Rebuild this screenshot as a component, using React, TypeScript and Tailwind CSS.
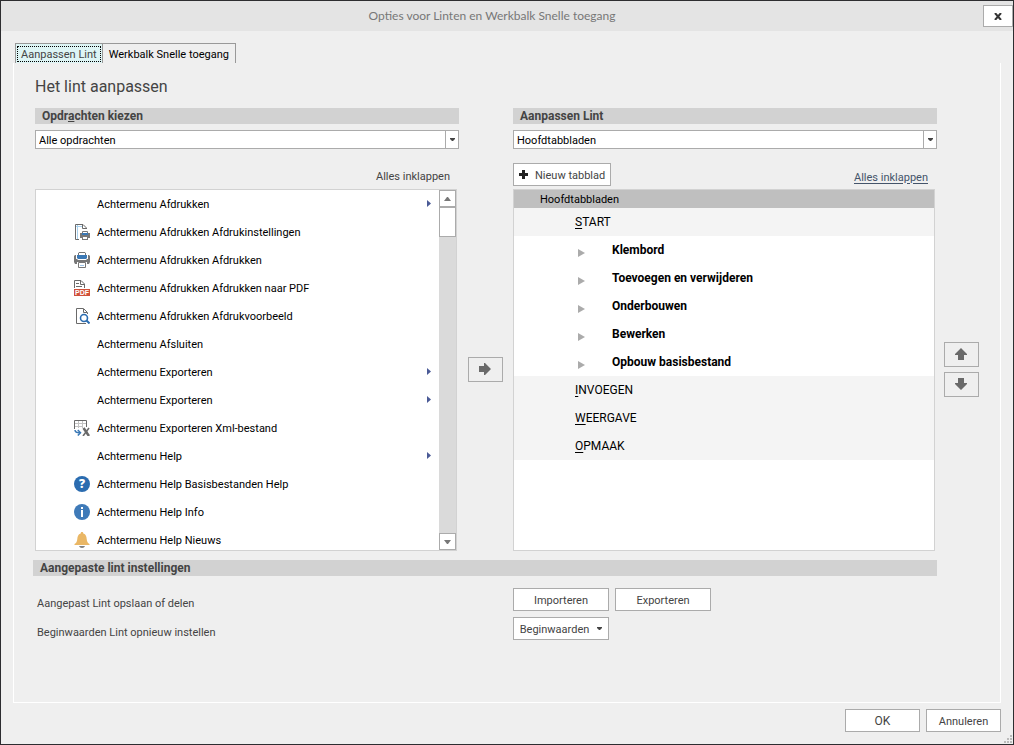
import { useState, type ReactNode } from "react";

type IconName = "page-setup" | "printer" | "pdf" | "preview" | "xml" | "help" | "info" | "bell";

type Command = { label: string; icon?: IconName; submenu?: boolean };

const COMMANDS: Command[] = [
  { label: "Achtermenu Afdrukken", submenu: true },
  { label: "Achtermenu Afdrukken Afdrukinstellingen", icon: "page-setup" },
  { label: "Achtermenu Afdrukken Afdrukken", icon: "printer" },
  { label: "Achtermenu Afdrukken Afdrukken naar PDF", icon: "pdf" },
  { label: "Achtermenu Afdrukken Afdrukvoorbeeld", icon: "preview" },
  { label: "Achtermenu Afsluiten" },
  { label: "Achtermenu Exporteren", submenu: true },
  { label: "Achtermenu Exporteren", submenu: true },
  { label: "Achtermenu Exporteren Xml-bestand", icon: "xml" },
  { label: "Achtermenu Help", submenu: true },
  { label: "Achtermenu Help Basisbestanden Help", icon: "help" },
  { label: "Achtermenu Help Info", icon: "info" },
  { label: "Achtermenu Help Nieuws", icon: "bell" },
];

const RIBBON_TABS = [
  {
    name: "START",
    groups: ["Klembord", "Toevoegen en verwijderen", "Onderbouwen", "Bewerken", "Opbouw basisbestand"],
  },
  { name: "INVOEGEN", groups: [] },
  { name: "WEERGAVE", groups: [] },
  { name: "OPMAAK", groups: [] },
];

const GRID = "grid grid-cols-[minmax(0,1fr)_54px_minmax(0,1fr)_63px]";
const BUTTON = "flex items-center justify-center border border-[#ababab] bg-white text-[#444] hover:bg-[#e6f2fa]";
const MOVE_BUTTON = "flex h-[25px] w-[35px] items-center justify-center border border-[#ababab]";

function CommandIcon({ name }: { name: IconName }) {
  return (
    <svg width="16" height="16" viewBox="0 0 16 16" aria-hidden="true">
      {name === "page-setup" && (
        <g fill="none">
          <path d="M3.500 1V15M2 2.500H8" stroke="#a9d1ee" />
          <path d="M5 15.500H1.500V.5H9L12.500 4V5M8.500 1V4.500H12" stroke="#6a6a6a" />
          <path d="M8.500 9V7.500h5V9" stroke="#777" />
          <rect x="6" y="9" width="10" height="5" fill="#777" />
          <rect x="8" y="9" width="6" height="2" fill="#3a78b5" />
          <rect x="8.500" y="12.500" width="5" height="3" fill="#fff" stroke="#777" />
        </g>
      )}
      {name === "printer" && (
        <g>
          <path d="M4.500 3V1l.5-.5h6l.5.5v2" fill="#fff" stroke="#777" />
          <path d="M0 4l1-1h1v5h12V3h1l1 1v6l-1 2H1l-1-2z" fill="#777" />
          <path d="M3 3h10v3l-1 1H4L3 6z" fill="#3a78b5" />
          <path d="M2 7h1l1 1h8l1-1h1v1H2z" fill="#777" />
          <rect x="3" y="10" width="10" height="2" fill="#fff" />
          <path d="M4.500 10.500h7v5h-7z" fill="#fff" stroke="#777" />
          <path d="M6 13.500h4" stroke="#9dc3e6" />
        </g>
      )}
      {name === "pdf" && (
        <g>
          <path d="M.5 8V.5H7L10.500 4V8M6.500 1V4.500H10M2 3.500H5M2 6.500H8" fill="none" stroke="#6a6a6a" />
          <rect y="9" width="16" height="7" fill="#d0503a" />
          <text x="8" y="15" textAnchor="middle" fontFamily="Liberation Sans, sans-serif" fontSize="7" fontWeight="700" fill="#fff">
            PDF
          </text>
        </g>
      )}
      {name === "preview" && (
        <g fill="none">
          <path d="M12 15.500H2.500V.5H9.500L13.500 4.500V6M9.500 1V4.500H13" stroke="#6a6a6a" />
          <circle cx="10" cy="10" r="3.500" fill="#fff" stroke="#2b6cb0" strokeWidth="1.600" />
          <path d="M12.500 12.500L15.500 15.500" stroke="#2b6cb0" strokeWidth="2" />
        </g>
      )}
      {name === "xml" && (
        <g fill="none">
          <path d="M4.500 1V8M8.500 1V8M1 3.500H12M1 6.500H8" stroke="#c4c4c4" />
          <path d="M.5 9V.5H12.500V7" stroke="#6a6a6a" />
          <path d="M1 10c0 2 1 2.800 5 2.800M3.800 10L6.500 12.800L3.800 15.500" stroke="#3a78b5" strokeWidth="1.500" />
          <path d="M9.500 8L15 16" stroke="#6a6a6a" strokeWidth="2.600" />
          <path d="M15 8L9 16" stroke="#6a6a6a" strokeWidth="1.600" />
        </g>
      )}
      {name === "help" && (
        <g>
          <circle cx="8" cy="8" r="8" fill="#2b6cb0" />
          <text x="8" y="12" textAnchor="middle" fontFamily="Open Sans, sans-serif" fontSize="12" fontWeight="800" fill="#fff">
            ?
          </text>
        </g>
      )}
      {name === "info" && (
        <g>
          <circle cx="8" cy="8" r="8" fill="#3f7ab8" />
          <rect x="7" y="3" width="2" height="2" fill="#fff" />
          <rect x="7" y="6" width="2" height="7" fill="#fff" />
        </g>
      )}
      {name === "bell" && (
        <g>
          <path d="M8 0c-1 0-1.300.7-1.300 1.400C4 2.200 3.500 4.500 3.300 7C3.100 9.800 2.200 11 .5 12v1h15v-1c-1.700-1-2.600-2.200-2.800-5C12.500 4.500 12 2.200 9.300 1.400C9.300.7 9 0 8 0z" fill="#eab765" />
          <path d="M5 14h6c-.5 1.200-1.500 2-3 2s-2.500-.8-3-2z" fill="#808080" />
        </g>
      )}
    </svg>
  );
}

function Arrow({ rotate = 0 }: { rotate?: number }) {
  return (
    <svg width="12" height="12" viewBox="0 0 12 12" className="mr-px" aria-hidden="true">
      <path d="M0 3h5V0h1l6 6l-6 6H5V9H0z" fill="#6a6a6a" transform={`rotate(${rotate} 6 6)`} />
    </svg>
  );
}

function Caret() {
  return (
    <svg width="5" height="3" viewBox="0 0 5 3" aria-hidden="true">
      <path d="M0 0h5v1L3 3H2L0 1z" fill="#444" />
    </svg>
  );
}

function SectionBar({ children }: { children: ReactNode }) {
  return <h2 className="h-4 bg-[#d2d2d2] px-[7px] text-[12px] leading-4 font-bold text-[#444]">{children}</h2>;
}

function Dropdown({ label, options }: { label: string; options: string[] }) {
  return (
    <div className="relative">
      <select
        aria-label={label}
        className="block h-[19px] w-full appearance-none border border-[#ababab] bg-white pt-[2px] pr-4 pl-[3px] leading-4 text-black"
      >
        {options.map((o) => (
          <option key={o}>{o}</option>
        ))}
      </select>
      <span className="pointer-events-none absolute inset-y-0 right-0 flex w-[14px] items-center justify-center border border-[#ababab]">
        <Caret />
      </span>
    </div>
  );
}

function ScrollBar() {
  return (
    <div className="flex w-[17px] shrink-0 flex-col bg-[#dadada]">
      <button aria-label="Omhoog" className="flex h-[17px] items-center justify-center border border-[#ababab] bg-white">
        <svg width="7" height="4" viewBox="0 0 7 4">
          <path d="M0 4L3 0h1l3 4z" fill="#777" />
        </svg>
      </button>
      <div className="h-[30px] border border-[#ababab] bg-white" />
      <button aria-label="Omlaag" className="mt-auto flex h-[17px] items-center justify-center border border-[#ababab] bg-white">
        <svg width="7" height="4" viewBox="0 0 7 4">
          <path d="M0 0h7L4 4H3z" fill="#777" />
        </svg>
      </button>
    </div>
  );
}

function CommandList() {
  return (
    <div className="mr-[2px] flex h-[362px] border border-[#d2d2d2] bg-white">
      <ul className="flex-1 overflow-hidden text-black">
        {COMMANDS.map((c, i) => (
          <li key={i} className="flex h-7 items-center pr-2 pl-[38px]">
            <span className="mr-[7px] size-4">{c.icon && <CommandIcon name={c.icon} />}</span>
            <span className="flex-1 pt-[2px]">{c.label}</span>
            {c.submenu && (
              <svg width="4" height="7" viewBox="0 0 4 7" className="mb-px" aria-hidden="true">
                <path d="M0 0L4 3.500L0 7z" fill="#4a5a96" />
              </svg>
            )}
          </li>
        ))}
      </ul>
      <ScrollBar />
    </div>
  );
}

function RibbonTree() {
  return (
    <div className="mr-[2px] h-[362px] overflow-hidden border border-[#d2d2d2] bg-white text-black">
      <div className="h-[18px] bg-[#bfbfbf] pl-[26px] leading-5">Hoofdtabbladen</div>
      {RIBBON_TABS.map((tab) => (
        <div key={tab.name}>
          <div className="h-7 bg-[#f4f4f4] pl-[61px] text-[12px] leading-7">
            <span className="underline underline-offset-2">{tab.name[0]}</span>
            {tab.name.slice(1)}
          </div>
          {tab.groups.map((group) => (
            <button key={group} className="flex h-7 w-full items-center pl-16 text-[12px] font-bold">
              <svg width="7" height="8" viewBox="0 0 7 8" className="mt-[6px] mr-[27px]" aria-hidden="true">
                <path d="M0 0L7 4L0 8z" fill="#ababab" />
              </svg>
              {group}
            </button>
          ))}
        </div>
      ))}
    </div>
  );
}

export default function App() {
  const [tab, setTab] = useState(0);

  return (
    <div className="relative flex min-h-screen flex-col border border-[#2d2d30] bg-[#efefef] font-['Roboto',sans-serif] text-[11px] leading-4 text-[#444]">
      <header className="flex h-[30px] items-center bg-[#e4e4e4]">
        <h1 className="flex-1 text-center font-['Lato',sans-serif] text-[12px] text-[#777]">
          Opties voor Linten en Werkbalk Snelle toegang
        </h1>
        <button aria-label="Sluiten" className={`${BUTTON} h-[22px] w-[30px]`}>
          <svg width="8" height="7" viewBox="0 0 8 7">
            <path d="M1 0L7 7M7 0L1 7" stroke="#333" strokeWidth="2" />
          </svg>
        </button>
      </header>

      <main className="flex flex-1 flex-col px-3 pt-3">
        <div role="tablist" className="flex pl-[2px]">
          {["Aanpassen Lint", "Werkbalk Snelle toegang"].map((name, i) => (
            <button
              key={name}
              role="tab"
              aria-selected={tab === i}
              onClick={() => setTab(i)}
              className={`h-5 border-t border-l border-[#999] p-px last:border-r ${
                tab === i ? "bg-[#def5f5] text-[#444]" : "text-black"
              }`}
            >
              <span
                className={`flex h-4 items-center border border-dotted pt-[2px] ${
                  tab === i ? "border-black px-[3px]" : "border-transparent px-1"
                }`}
              >
                {name}
              </span>
            </button>
          ))}
        </div>

        <section className="flex-1 border border-t-0 border-white pt-3 pl-[21px]">
          <p className="mb-[9px] text-base leading-6">Het lint aanpassen</p>

          <div className={GRID}>
            <SectionBar>
              Opdr<span className="underline">a</span>chten kiezen
            </SectionBar>
            <div className="col-start-3">
              <SectionBar>Aanpassen Lint</SectionBar>
            </div>
          </div>

          <div className={`${GRID} mt-[6px]`}>
            <Dropdown label="Opdrachten kiezen" options={["Alle opdrachten"]} />
            <div className="col-start-3">
              <Dropdown label="Aanpassen Lint" options={["Hoofdtabbladen"]} />
            </div>
          </div>

          <div className={`${GRID} mt-[14px] mb-[3px] items-center`}>
            <span className="pr-[9px] pt-1 text-right">Alles inklappen</span>
            <div className="col-start-3 flex items-center justify-between">
              <button className={`${BUTTON} h-[23px] gap-[7px] px-[5px]`}>
                <svg width="9" height="9" viewBox="0 0 9 9" aria-hidden="true">
                  <path d="M3 0h3v3h3v3H6v3H3V6H0V3h3z" fill="#222" />
                </svg>
                <span className="pt-[2px]">Nieuw tabblad</span>
              </button>
              <a href="#" className="mr-[9px] pt-[6px] text-[#44546a] underline underline-offset-2">
                Alles inklappen
              </a>
            </div>
          </div>

          <div className={`${GRID} items-center`}>
            <CommandList />
            <button aria-label="Toevoegen" className={`${MOVE_BUTTON} mb-[2px] ml-[9px]`}>
              <Arrow />
            </button>
            <RibbonTree />
            <div className="mb-[2px] flex flex-col gap-[5px] pl-[7px]">
              <button aria-label="Omhoog verplaatsen" className={MOVE_BUTTON}>
                <Arrow rotate={-90} />
              </button>
              <button aria-label="Omlaag verplaatsen" className={MOVE_BUTTON}>
                <Arrow rotate={90} />
              </button>
            </div>
          </div>

          <div className="mt-[9px] mr-[63px] -ml-[2px]">
            <SectionBar>Aangepaste lint instellingen</SectionBar>
          </div>

          <div className={`${GRID} mt-3 gap-y-[6px]`}>
            <span className="col-start-1 pl-[2px] leading-8">Aangepast Lint opslaan of delen</span>
            <div className="col-start-3 flex gap-[6px]">
              <button className={`${BUTTON} h-[23px] w-24 pt-[2px]`}>Importeren</button>
              <button className={`${BUTTON} h-[23px] w-24 pt-[2px]`}>Exporteren</button>
            </div>
          </div>
          <div className={`${GRID} -mt-[3px]`}>
            <span className="col-start-1 pl-[2px] leading-8">Beginwaarden Lint opnieuw instellen</span>
            <button className={`${BUTTON} col-start-3 h-[23px] w-24 gap-2`}>
              <span className="pt-[2px]">Beginwaarden</span>
              <Caret />
            </button>
          </div>
        </section>
      </main>

      <footer className="flex justify-end gap-[6px] pt-[6px] pr-3 pb-3">
        <button className={`${BUTTON} h-[23px] w-[75px] text-[12px]`}>OK</button>
        <button className={`${BUTTON} h-[23px] w-[75px] pt-[2px]`}>Annuleren</button>
      </footer>

      <svg width="8" height="8" viewBox="0 0 8 8" className="absolute right-px bottom-px" aria-hidden="true">
        <path d="M6 0h2v2H6zM3 3h2v2H3zM6 3h2v2H6zM0 6h2v2H0zM3 6h2v2H3zM6 6h2v2H6z" fill="#bbb" />
      </svg>
    </div>
  );
}
